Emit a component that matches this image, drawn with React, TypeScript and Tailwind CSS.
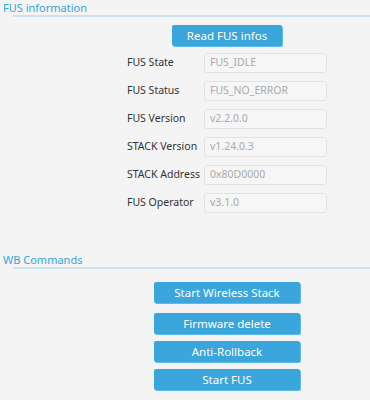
const fusRows = [
  { label: "FUS State", value: "FUS_IDLE" },
  { label: "FUS Status", value: "FUS_NO_ERROR" },
  { label: "FUS Version", value: "v2.2.0.0" },
  { label: "STACK Version", value: "v1.24.0.3" },
  { label: "STACK Address", value: "0x80D0000" },
  { label: "FUS Operator", value: "v3.1.0" },
]

const SectionTitle = ({ title }: { title: string }) => (
  <div className="flex flex-col">
    <div className="pl-[3px] text-[11px] leading-[14px] text-[#3aa3dc]">{title}</div>
    <div className="ml-[13px] h-[2px] bg-[#cde2ee]"></div>
  </div>
)

const BlueButton = ({ label, className }: { label: string; className: string }) => (
  <button
    className={`h-[21px] rounded-[2px] bg-[#3aa6db] text-[11.5px] text-white shadow-[1px_1px_0_#5cbbe8] ${className}`}>
    {label}
  </button>
)

export default function App() {
  return (
    <div
      className="h-[400px] w-[370px] overflow-hidden bg-[#f4f4f4] pt-[1px]"
      style={{ fontFamily: "'Noto Sans', 'Open Sans', sans-serif" }}>
      <SectionTitle title="FUS information" />
      <div className="mt-[8px] flex flex-col">
        <BlueButton label="Read FUS infos" className="ml-[172px] w-[110px]" />
        <div className="mt-[7px] flex flex-col gap-[8px]">
          {fusRows.map((row) => (
            <div className="flex items-center" key={row.label}>
              <div className="ml-[127px] w-[77px] text-[10.5px] text-[#333]">{row.label}</div>
              <div className="flex h-[20px] w-[123px] items-center rounded-[3px] border border-[#e2e2e2] bg-[#f6f6f6] pl-[5px] text-[10.5px] text-[#aaa]">
                {row.value}
              </div>
            </div>
          ))}
        </div>
      </div>
      <div className="mt-[40px]">
        <SectionTitle title="WB Commands" />
      </div>
      <div className="mt-[13px] flex flex-col">
        <BlueButton label="Start Wireless Stack" className="ml-[154px] w-[146px]" />
        <BlueButton label="Firmware delete" className="ml-[154px] mt-[10px] w-[146px]" />
        <BlueButton label="Anti-Rollback" className="ml-[154px] mt-[7px] w-[146px]" />
        <BlueButton label="Start FUS" className="ml-[154px] mt-[7px] w-[146px]" />
      </div>
    </div>
  )
}
